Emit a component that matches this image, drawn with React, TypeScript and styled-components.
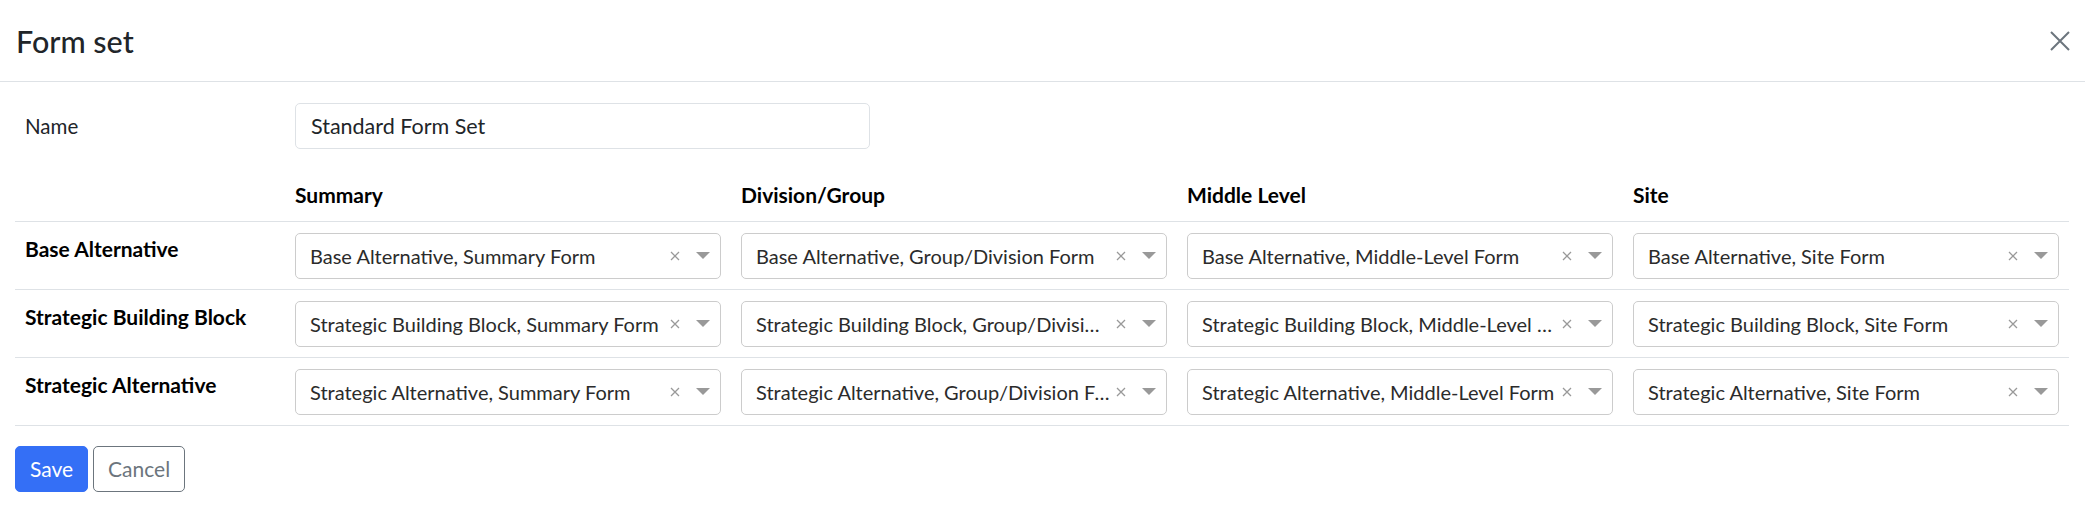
import React from 'react';
import styled, { createGlobalStyle } from 'styled-components';

const GlobalStyle = createGlobalStyle`
  html, body {
    margin: 0;
    background: #fff;
  }
  body {
    font-family: Lato, "Segoe UI", "Liberation Sans", sans-serif;
    font-size: 21px;
    line-height: 32px;
    color: #212529;
  }
  * {
    box-sizing: border-box;
  }
`;

const columns = ['Summary', 'Division/Group', 'Middle Level', 'Site'];

const rows = [
  {
    label: 'Base Alternative',
    values: [
      'Base Alternative, Summary Form',
      'Base Alternative, Group/Division Form',
      'Base Alternative, Middle-Level Form',
      'Base Alternative, Site Form'
    ]
  },
  {
    label: 'Strategic Building Block',
    values: [
      'Strategic Building Block, Summary Form',
      'Strategic Building Block, Group/Division Form',
      'Strategic Building Block, Middle-Level Form',
      'Strategic Building Block, Site Form'
    ]
  },
  {
    label: 'Strategic Alternative',
    values: [
      'Strategic Alternative, Summary Form',
      'Strategic Alternative, Group/Division Form',
      'Strategic Alternative, Middle-Level Form',
      'Strategic Alternative, Site Form'
    ]
  }
];

const Modal = styled.div`
  width: 100%;
  background: #fff;
`;

const Header = styled.div`
  height: 82px;
  display: flex;
  align-items: center;
  justify-content: space-between;
  padding: 0 15px 0 16px;
  border-bottom: 1px solid #dee2e6;
`;

const Title = styled.h5`
  margin: 0;
  font-size: 30.5px;
  font-weight: 500;
  line-height: 40px;
  color: #212529;
`;

const CloseButton = styled.button`
  width: 20px;
  height: 20px;
  padding: 0;
  border: 0;
  background: none;
  display: flex;
  cursor: pointer;
`;

const Body = styled.div`
  padding: 21px 16px 0 15px;
`;

const NameRow = styled.div`
  display: grid;
  grid-template-columns: 280px 575px;
  align-items: center;
`;

const Label = styled.label`
  padding-left: 10px;
  font-size: 20.5px;
`;

const TextInput = styled.input`
  height: 46px;
  padding: 0 15px;
  border: 1px solid #dee2e6;
  border-radius: 5px;
  font: inherit;
  font-size: 21.5px;
  color: #212529;
  outline: none;
`;

const Table = styled.table`
  width: 100%;
  margin-top: 19px;
  border-collapse: collapse;
  table-layout: fixed;
`;

const HeadCell = styled.th`
  padding: 10.5px 10px;
  text-align: left;
  font-weight: 700;
  color: #000;
  border-bottom: 1px solid #dee2e6;
`;

const RowLabel = styled.td`
  padding: 10.5px 10px;
  vertical-align: top;
  font-weight: 700;
  color: #000;
  border-bottom: 1px solid #dee2e6;
`;

const Cell = styled.td`
  padding: 10.5px 10px;
  vertical-align: top;
  border-bottom: 1px solid #dee2e6;
`;

const SelectBox = styled.div`
  height: 46px;
  display: flex;
  align-items: center;
  padding-left: 14px;
  border: 1px solid #ccc;
  border-radius: 5px;
  background: #fff;
  color: #2b2b2b;
  font-size: 20px;
`;

const SelectValue = styled.span`
  flex: 1;
  min-width: 0;
  white-space: nowrap;
  overflow: hidden;
  text-overflow: ellipsis;
`;

const Indicator = styled.span<{ $w: number }>`
  flex: none;
  width: ${(p) => p.$w}px;
  display: flex;
  align-items: center;
  justify-content: center;
`;

const Footer = styled.div`
  display: flex;
  gap: 5px;
  margin-top: 20px;
`;

const Button = styled.button<{ $primary?: boolean }>`
  height: 46px;
  padding: 0 14px;
  border-radius: 5px;
  font: inherit;
  cursor: pointer;
  border: 1px solid ${(p) => (p.$primary ? '#346ff6' : '#6c757d')};
  background: ${(p) => (p.$primary ? '#346ff6' : '#fff')};
  color: ${(p) => (p.$primary ? '#fff' : '#6c757d')};
`;

const Select: React.FC<{ value: string }> = ({ value }) => (
  <SelectBox>
    <SelectValue>{value}</SelectValue>
    <Indicator $w={22}>
      <svg width="10" height="10" viewBox="0 0 10 10">
        <path d="M1 1L9 9M9 1L1 9" stroke="#999" strokeWidth="1.3" />
      </svg>
    </Indicator>
    <Indicator $w={34}>
      <svg width="14" height="7" viewBox="0 0 14 7">
        <path d="M0 0H14L7 7Z" fill="#999" />
      </svg>
    </Indicator>
  </SelectBox>
);

export default function App() {
  return (
    <>
      <GlobalStyle />
      <Modal>
        <Header>
          <Title>Form set</Title>
          <CloseButton aria-label="Close">
            <svg width="20" height="20" viewBox="0 0 20 20">
              <path
                d="M1 1L19 19M19 1L1 19"
                stroke="#6c757d"
                strokeWidth="2"
              />
            </svg>
          </CloseButton>
        </Header>
        <Body>
          <NameRow>
            <Label>Name</Label>
            <TextInput defaultValue="Standard Form Set" />
          </NameRow>
          <Table>
            <colgroup>
              <col style={{ width: 270 }} />
              <col />
              <col />
              <col />
              <col />
            </colgroup>
            <thead>
              <tr>
                <HeadCell />
                {columns.map((c) => (
                  <HeadCell key={c}>{c}</HeadCell>
                ))}
              </tr>
            </thead>
            <tbody>
              {rows.map((r) => (
                <tr key={r.label}>
                  <RowLabel>{r.label}</RowLabel>
                  {r.values.map((v) => (
                    <Cell key={v}>
                      <Select value={v} />
                    </Cell>
                  ))}
                </tr>
              ))}
            </tbody>
          </Table>
          <Footer>
            <Button $primary>Save</Button>
            <Button>Cancel</Button>
          </Footer>
        </Body>
      </Modal>
    </>
  );
}
